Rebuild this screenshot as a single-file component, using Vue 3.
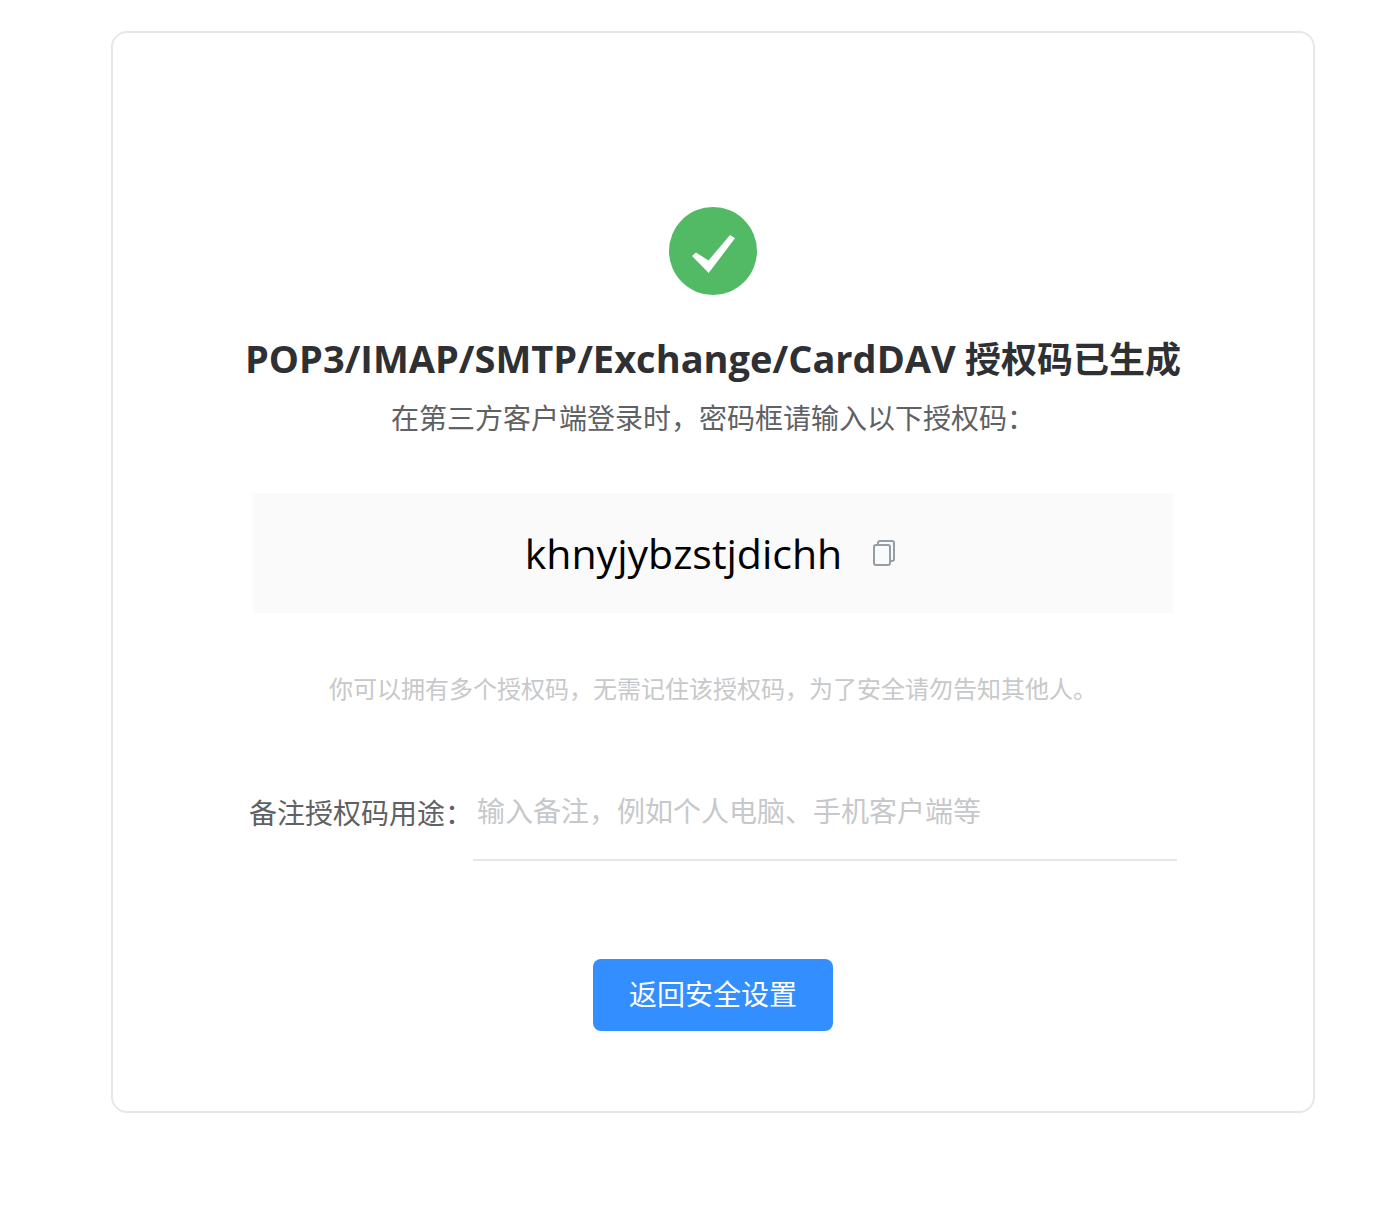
<script setup>
import { ref } from 'vue'

const code = 'khnyjybzstjdichh'
const note = ref('')
const copyCode = () => navigator.clipboard?.writeText(code)
</script>

<template>
  <main class="page">
    <section class="card">
      <svg class="status" viewBox="0 0 88 88" aria-hidden="true">
        <circle cx="44" cy="44" r="44" fill="#52b965" />
        <path d="M23 49L27 45.5L39.5 53.5L61 28L66 31.3L39.7 66Z" fill="#fff" />
      </svg>
      <h1 class="title"><span class="latin">POP3/IMAP/SMTP/Exchange/CardDAV</span> 授权码已生成</h1>
      <p class="lead">在第三方客户端登录时，密码框请输入以下授权码：</p>
      <div class="code-box">
        <span class="code">{{ code }}</span>
        <button class="copy" type="button" aria-label="复制" @click="copyCode">
          <svg viewBox="0 0 24 28" fill="none" stroke="#959da6" stroke-width="2">
            <rect x="2" y="6" width="16" height="20" rx="2" />
            <path d="M6 5V4Q6 2 8 2H20Q22 2 22 4V20Q22 22 20 22H19" />
          </svg>
        </button>
      </div>
      <p class="hint">你可以拥有多个授权码，无需记住该授权码，为了安全请勿告知其他人。</p>
      <div class="field">
        <label for="note">备注授权码用途：</label>
        <input id="note" v-model="note" type="text" placeholder="输入备注，例如个人电脑、手机客户端等" />
      </div>
      <button class="back" type="button">返回安全设置</button>
    </section>
  </main>
</template>

<style>
body {
  margin: 0;
  background: #fff;
}
</style>

<style scoped>
.page {
  padding: 31px 82px 104px 111px;
  font-family: "Noto Sans", "Noto Sans CJK SC", sans-serif;
}
.card {
  box-sizing: border-box;
  display: flex;
  flex-direction: column;
  align-items: center;
  padding: 174px 136px 80px;
  border: 2px solid #e7e7eb;
  border-radius: 16px;
}
.status {
  width: 88px;
  height: 88px;
}
.title {
  margin: 36px 0 0;
  font: 700 36px/54px "Open Sans", "Noto Sans CJK SC", sans-serif;
  color: #2e3033;
  white-space: nowrap;
}
.latin {
  font-size: 38px;
}
.lead {
  margin: 9px 0 0;
  font-size: 28px;
  line-height: 44px;
  color: #5f6164;
  white-space: nowrap;
}
.code-box {
  box-sizing: border-box;
  display: flex;
  align-items: center;
  justify-content: center;
  gap: 30px;
  width: 100%;
  max-width: 920px;
  height: 120px;
  margin-top: 53px;
  padding-right: 5px;
  background: #fafafa;
}
.code {
  font: 41px/60px "Open Sans", sans-serif;
  color: #000;
}
.copy {
  width: 24px;
  height: 28px;
  padding: 0;
  border: 0;
  background: none;
  cursor: pointer;
}
.copy svg {
  display: block;
  width: 24px;
  height: 28px;
}
.hint {
  margin: 56px 0 0;
  font-size: 24px;
  line-height: 40px;
  color: #c7c8ca;
  white-space: nowrap;
}
.field {
  display: flex;
  align-items: center;
  width: 100%;
  margin-top: 54px;
  font-size: 28px;
  color: #5f6164;
}
.field label {
  white-space: nowrap;
}
.field input {
  flex: 1;
  min-width: 0;
  height: 96px;
  padding: 0 4px;
  border: 0;
  border-bottom: 2px solid #e7e7eb;
  outline: 0;
  background: none;
  font: inherit;
}
.field input::placeholder {
  color: #c7c8ca;
  opacity: 1;
}
.back {
  width: 240px;
  height: 72px;
  margin-top: 98px;
  padding: 0 0 4px;
  border: 0;
  border-radius: 8px;
  background: #338fff;
  color: #fff;
  font: 28px/42px "Noto Sans CJK SC", sans-serif;
  cursor: pointer;
}
</style>
